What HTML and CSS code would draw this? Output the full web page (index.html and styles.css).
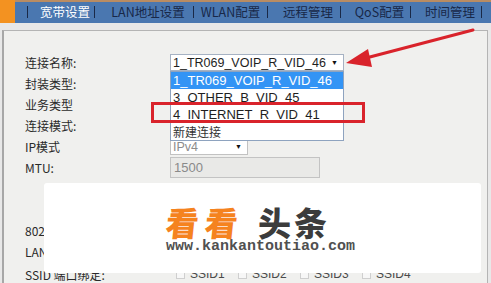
FILE: index.html
```html
<!DOCTYPE html>
<html lang="zh-CN">
<head>
<meta charset="utf-8">
<title>宽带设置</title>
<link rel="stylesheet" href="styles.css">
</head>
<body>
<div class="page">
  <header class="topbar">
    <div class="accent"></div>
    <nav class="tabs">
      <span class="tab tab-active">宽带设置</span>
      <span class="tab tab-wide">LAN地址设置</span>
      <span class="tab tab-wlan">WLAN配置</span>
      <span class="tab tab-remote">远程管理</span>
      <span class="tab tab-qos">QoS配置</span>
      <span class="tab tab-time">时间管理</span>
    </nav>
  </header>

  <main class="panel">
    <div class="form">
      <div class="label">连接名称:</div>
      <div class="control">
        <div class="select-wrap">
          <div class="select select-main"><span>1_TR069_VOIP_R_VID_46</span><span class="caret">▼</span></div>
          <ul class="dropdown">
            <li class="opt opt-selected">1_TR069_VOIP_R_VID_46</li>
            <li class="opt">3_OTHER_B_VID_45</li>
            <li class="opt">4_INTERNET_R_VID_41</li>
            <li class="opt opt-cjk">新建连接</li>
          </ul>
        </div>
      </div>

      <div class="label">封装类型:</div>
      <div class="control"></div>

      <div class="label">业务类型</div>
      <div class="control"></div>

      <div class="label">连接模式:</div>
      <div class="control"></div>

      <div class="label">IP模式</div>
      <div class="control">
        <div class="select select-ip"><span>IPv4</span><span class="caret">▼</span></div>
      </div>

      <div class="label">MTU:</div>
      <div class="control">
        <div class="input input-mtu">1500</div>
      </div>

      <div class="label row-spacer"></div>
      <div class="control row-spacer"></div>
      <div class="label row-spacer2"></div>
      <div class="control row-spacer2"></div>

      <div class="label">802.1p:</div>
      <div class="control"></div>

      <div class="label">LAN 端口绑定:</div>
      <div class="control"></div>

      <div class="label row-last">SSID 端口绑定:</div>
      <div class="control row-last checks">
        <label class="check"><span class="box"></span>SSID1</label>
        <label class="check"><span class="box"></span>SSID2</label>
        <label class="check"><span class="box"></span>SSID3</label>
        <label class="check"><span class="box"></span>SSID4</label>
      </div>
    </div>
  </main>

  <div class="watermark">
    <div class="wm-inner">
      <div class="wm-brand"><span class="wm-orange">看看</span><span class="wm-dark">头条</span></div>
      <div class="wm-url">www.kankantoutiao.com</div>
    </div>
  </div>

  <svg class="annot" width="491" height="283" viewBox="0 0 491 283">
    <rect x="152.5" y="103.5" width="211" height="18" fill="none" stroke="#d9232b" stroke-width="3"/>
    <line x1="366" y1="58" x2="473" y2="30" stroke="#d9232b" stroke-width="3" stroke-linecap="round"/>
    <polygon points="346,63 368,49 372,67" fill="#d9232b"/>
  </svg>
</div>
</body>
</html>
```

FILE: styles.css
```css
html, body {
  margin: 0;
  padding: 0;
}
body {
  background: #e8e8e8;
  font-family: "Noto Sans CJK SC", "Liberation Sans", sans-serif;
  width: 491px;
  height: 283px;
  overflow: hidden;
}
.page {
  position: relative;
  width: 491px;
  height: 283px;
  overflow: hidden;
}

/* top bar */
.topbar {
  display: flex;
  height: 23px;
}
.accent {
  width: 15px;
  background: #f39221;
}
.tabs {
  flex: 1;
  display: grid;
  grid-template-columns: 67px 99px 74px 73px 70px 72px;
  align-items: center;
  padding-left: 12px;
  background: #4a77b0;
  box-shadow: inset 0 2px 0 #b98c63;
}
.tab {
  height: 12px;
  line-height: 12px;
  border-left: 1px solid #1a2947;
  text-align: center;
  padding-left: 8px;
  font-size: 12.5px;
  color: #182848;
  white-space: nowrap;
  margin-top: 1px;
}
.tab-active { color: #ffffff; }
.tab-wlan { padding-left: 0; }
.tab-time { border-right: 1px solid #1a2947; }

/* panel */
.panel {
  margin: 7px 3px 0 2px;
  height: 300px;
  background: #f0f0ee;
  border: 1px solid #b4b4b4;
  border-left: 2px solid #a7a7a7;
  padding: 21px 0 0 21px;
}
.form {
  display: grid;
  grid-template-columns: 145px 1fr;
  grid-auto-rows: 21px;
  align-items: center;
}
.label {
  font-size: 12px;
  color: #2a2a2a;
  white-space: nowrap;
}
.row-spacer { height: 22px; }
.row-spacer2 { height: 23px; }
.form > .row-spacer,
.form > .row-spacer2 { align-self: stretch; }
.row-last {
  height: 23px;
  line-height: 23px;
  margin-top: 4px;
}

/* selects */
.select-wrap {
  position: relative;
  width: 174px;
}
.select {
  box-sizing: border-box;
  height: 17px;
  display: flex;
  justify-content: space-between;
  align-items: center;
  background: #fff;
  border: 1px solid #a6b2c3;
  padding: 0 5px 0 2px;
  font-family: "Liberation Sans", sans-serif;
  font-size: 12.5px;
  color: #1e1e1e;
}
.caret {
  font-size: 7px;
  color: #111;
}
.select-main { width: 174px; }
.select-ip {
  width: 78px;
  color: #8c8c8c;
  border-color: #c2c2c2;
}
.dropdown {
  position: absolute;
  top: 17px;
  left: 0;
  width: 174px;
  box-sizing: border-box;
  margin: 0;
  padding: 0;
  list-style: none;
  background: #fff;
  border: 1px solid #8ea3bf;
  z-index: 2;
}
.opt {
  height: 17px;
  line-height: 17px;
  padding-left: 2px;
  font-family: "Liberation Sans", sans-serif;
  font-size: 13px;
  color: #1e1e1e;
  white-space: nowrap;
}
.opt-selected {
  background: #3394f5;
  color: #ffffff;
}
.opt-cjk {
  font-family: "Noto Sans CJK SC", sans-serif;
  font-size: 12px;
  color: #333;
}

/* input */
.input-mtu {
  box-sizing: border-box;
  width: 150px;
  height: 21px;
  line-height: 19px;
  background: #e9e9e7;
  border: 1px solid #c3c3c3;
  padding-left: 3px;
  font-family: "Liberation Sans", sans-serif;
  font-size: 13px;
  color: #8a8a8a;
}

/* checkboxes */
.checks {
  display: flex;
  padding-left: 6px;
}
.check {
  width: 62px;
  display: flex;
  align-items: center;
  gap: 5px;
  font-family: "Liberation Sans", sans-serif;
  font-size: 12px;
  color: #4a4a4a;
}
.box {
  width: 7px;
  height: 7px;
  border: 1px solid #cfcfcf;
  background: #f7f7f7;
}

/* watermark overlay */
.watermark {
  position: absolute;
  left: 44px;
  top: 183px;
  width: 437px;
  height: 90px;
  background: #ffffff;
  border-radius: 3px;
  z-index: 5;
}
.wm-inner {
  margin: 22px 0 0 122px;
}
.wm-brand {
  height: 34px;
  line-height: 34px;
  font-size: 33px;
  font-weight: 900;
  white-space: nowrap;
}
.wm-orange {
  color: #f5831f;
  letter-spacing: 6px;
  display: inline-block;
  transform: skewX(-6deg);
}
.wm-dark {
  color: #3c3c3c;
  letter-spacing: 3px;
  margin-left: 14px;
}
.wm-url {
  height: 16px;
  line-height: 16px;
  font-family: "Liberation Mono", monospace;
  font-weight: bold;
  font-size: 15px;
  color: #505050;
  white-space: nowrap;
}

/* red annotation overlay */
.annot {
  position: absolute;
  left: 0;
  top: 0;
  z-index: 6;
  pointer-events: none;
}
```
